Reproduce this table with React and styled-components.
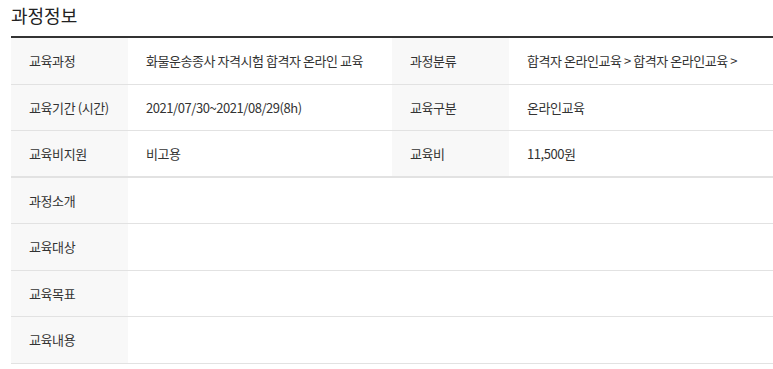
import React from "react";
import styled, { createGlobalStyle } from "styled-components";

const GlobalStyle = createGlobalStyle`
  body {
    margin: 0;
    background: #fff;
    font-family: "Noto Sans CJK KR", "Noto Sans", sans-serif;
    color: #333;
  }
`;

const Section = styled.section`
  padding: 4px 0 0 11px;
`;

const Title = styled.h3`
  margin: 0 0 10px 0;
  font-size: 18px;
  font-weight: 400;
  line-height: 22px;
  color: #222;
`;

const Table = styled.div`
  width: 762px;
  border-top: 2px solid #333;
`;

const Row = styled.div`
  display: grid;
  grid-template-columns: 117px 264px 117px 264px;
  height: 46.5px;
  box-sizing: border-box;
  border-bottom: ${(p) => (p.$heavy ? "2px" : "1px")} solid #e2e2e2;
`;

const Label = styled.div`
  display: flex;
  align-items: center;
  padding-left: 18px;
  background: #f8f8f8;
  font-size: 13px;
  letter-spacing: -0.4px;
  color: #333;
`;

const Value = styled.div`
  display: flex;
  align-items: center;
  padding-left: 18px;
  font-size: 13px;
  letter-spacing: -0.45px;
  color: #333;
  white-space: nowrap;
  grid-column: ${(p) => (p.$wide ? "span 3" : "auto")};
`;

const pairs = [
  ["교육과정", "화물운송종사 자격시험 합격자 온라인 교육", "과정분류", "합격자 온라인교육 > 합격자 온라인교육 >"],
  ["교육기간 (시간)", "2021/07/30~2021/08/29(8h)", "교육구분", "온라인교육"],
  ["교육비지원", "비고용", "교육비", "11,500원"],
];

const singles = ["과정소개", "교육대상", "교육목표", "교육내용"];

export default function App() {
  return (
    <>
      <GlobalStyle />
      <Section>
        <Title>과정정보</Title>
        <Table>
          {pairs.map((r, i) => (
            <Row key={r[0]} $heavy={i === pairs.length - 1}>
              <Label>{r[0]}</Label>
              <Value>{r[1]}</Value>
              <Label>{r[2]}</Label>
              <Value>{r[3]}</Value>
            </Row>
          ))}
          {singles.map((s) => (
            <Row key={s}>
              <Label>{s}</Label>
              <Value $wide />
            </Row>
          ))}
        </Table>
      </Section>
    </>
  );
}
